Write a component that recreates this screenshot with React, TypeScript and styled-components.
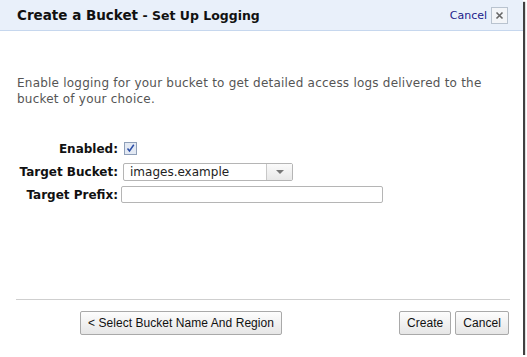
import styled, { createGlobalStyle } from "styled-components";

const GlobalStyle = createGlobalStyle`
  html, body {
    margin: 0;
    padding: 0;
    background: #ffffff;
  }
  body {
    font-family: "DejaVu Sans", Verdana, sans-serif;
  }
`;

const Dialog = styled.div`
  width: 523px;
  height: 355px;
  background: #fff;
  display: flex;
  flex-direction: column;
  box-shadow: 2px 2px 1px rgba(0, 0, 0, 0.75);
  box-sizing: border-box;
`;

const Header = styled.div`
  height: 31px;
  box-sizing: border-box;
  background: #e9f0fa;
  border-bottom: 1px solid #c6d7ee;
  display: flex;
  align-items: center;
  padding: 0 15px 0 17px;
`;

const Title = styled.div`
  font-weight: bold;
  font-size: 12.5px;
  color: #111;
  flex: 1;
`;

const TitleMain = styled.span`
  font-size: 13.5px;
`;

const CancelLink = styled.a`
  font-size: 11px;
  color: #1c1c8a;
  text-decoration: none;
  margin-right: 4px;
`;

const CloseBox = styled.span`
  width: 15px;
  height: 15px;
  border: 1px solid #b9c3cf;
  background: #f3f5f8;
  display: flex;
  align-items: center;
  justify-content: center;
`;

const Body = styled.div`
  flex: 1;
  padding: 44px 17px 0 17px;
`;

const Intro = styled.p`
  margin: 0;
  font-family: "DejaVu Sans", Verdana, sans-serif;
  font-size: 12px;
  line-height: 16px;
  color: #555;
  letter-spacing: 0.22px;
`;

const Form = styled.div`
  margin-top: 30px;
  display: grid;
  grid-template-columns: 101px auto;
  grid-auto-rows: 23px;
  column-gap: 4px;
  align-items: center;
`;

const Label = styled.label`
  font-size: 12px;
  font-weight: bold;
  color: #111;
  text-align: right;
  white-space: nowrap;
`;

const Check = styled.span`
  width: 11px;
  height: 11px;
  margin-left: 2px;
  border: 1px solid #8f9fb8;
  background: #e3e9f3;
  display: flex;
  align-items: center;
  justify-content: center;
`;

const Select = styled.div`
  width: 170px;
  height: 18px;
  margin-left: 1px;
  border: 1px solid #b5b5b5;
  border-radius: 2px;
  display: flex;
  box-sizing: border-box;
  background: #fff;
`;

const SelectValue = styled.div`
  flex: 1;
  font-size: 12px;
  line-height: 16px;
  color: #222;
  padding-left: 6px;
`;

const SelectArrow = styled.div`
  width: 25px;
  border-left: 1px solid #c8c8c8;
  background: linear-gradient(#fafafa, #e8e8e8);
  display: flex;
  align-items: center;
  justify-content: center;
`;

const TextInput = styled.input`
  width: 262px;
  height: 17px;
  box-sizing: border-box;
  border: 1px solid #b5b5b5;
  border-radius: 2px;
  margin: 0 0 0 -1px;
  padding: 0;
`;

const Footer = styled.div`
  margin: 0 13px 0 16px;
  border-top: 1px solid #cfcfcf;
  padding: 11px 1px 20px 64px;
  display: flex;
  align-items: center;
`;

const Button = styled.button`
  font-family: "Liberation Sans", Arial, sans-serif;
  font-size: 12px;
  letter-spacing: 0.05px;
  color: #111;
  height: 24px;
  padding: 0 7px;
  border: 1px solid #a9a9a9;
  border-radius: 2px;
  background: linear-gradient(#fdfdfd, #e6e6e6);
  box-sizing: border-box;
`;

const Spacer = styled.div`
  flex: 1;
`;

const ButtonGroup = styled.div`
  display: flex;
  gap: 4px;
`;

export default function App() {
  return (
    <>
      <GlobalStyle />
      <Dialog>
        <Header>
          <Title>
            <TitleMain>Create a Bucket</TitleMain> - Set Up Logging
          </Title>
          <CancelLink href="#">Cancel</CancelLink>
          <CloseBox>
            <svg width="9" height="9" viewBox="0 0 9 9">
              <path d="M1.5 1.5 L7.5 7.5 M7.5 1.5 L1.5 7.5" stroke="#666" strokeWidth="1.6" />
            </svg>
          </CloseBox>
        </Header>
        <Body>
          <Intro>
            Enable logging for your bucket to get detailed access logs delivered to the bucket of
            your choice.
          </Intro>
          <Form>
            <Label>Enabled:</Label>
            <Check>
              <svg width="9" height="9" viewBox="0 0 9 9">
                <path d="M1.5 4.5 L3.5 7 L7.8 0.8" stroke="#2c4ea8" strokeWidth="1.5" fill="none" />
              </svg>
            </Check>
            <Label>Target Bucket:</Label>
            <Select>
              <SelectValue>images.example</SelectValue>
              <SelectArrow>
                <svg width="8" height="4" viewBox="0 0 8 4">
                  <path d="M0 0 H8 L4 4 Z" fill="#777" />
                </svg>
              </SelectArrow>
            </Select>
            <Label>Target Prefix:</Label>
            <TextInput type="text" />
          </Form>
        </Body>
        <Footer>
          <Button>&lt; Select Bucket Name And Region</Button>
          <Spacer />
          <ButtonGroup>
            <Button>Create</Button>
            <Button>Cancel</Button>
          </ButtonGroup>
        </Footer>
      </Dialog>
    </>
  );
}
